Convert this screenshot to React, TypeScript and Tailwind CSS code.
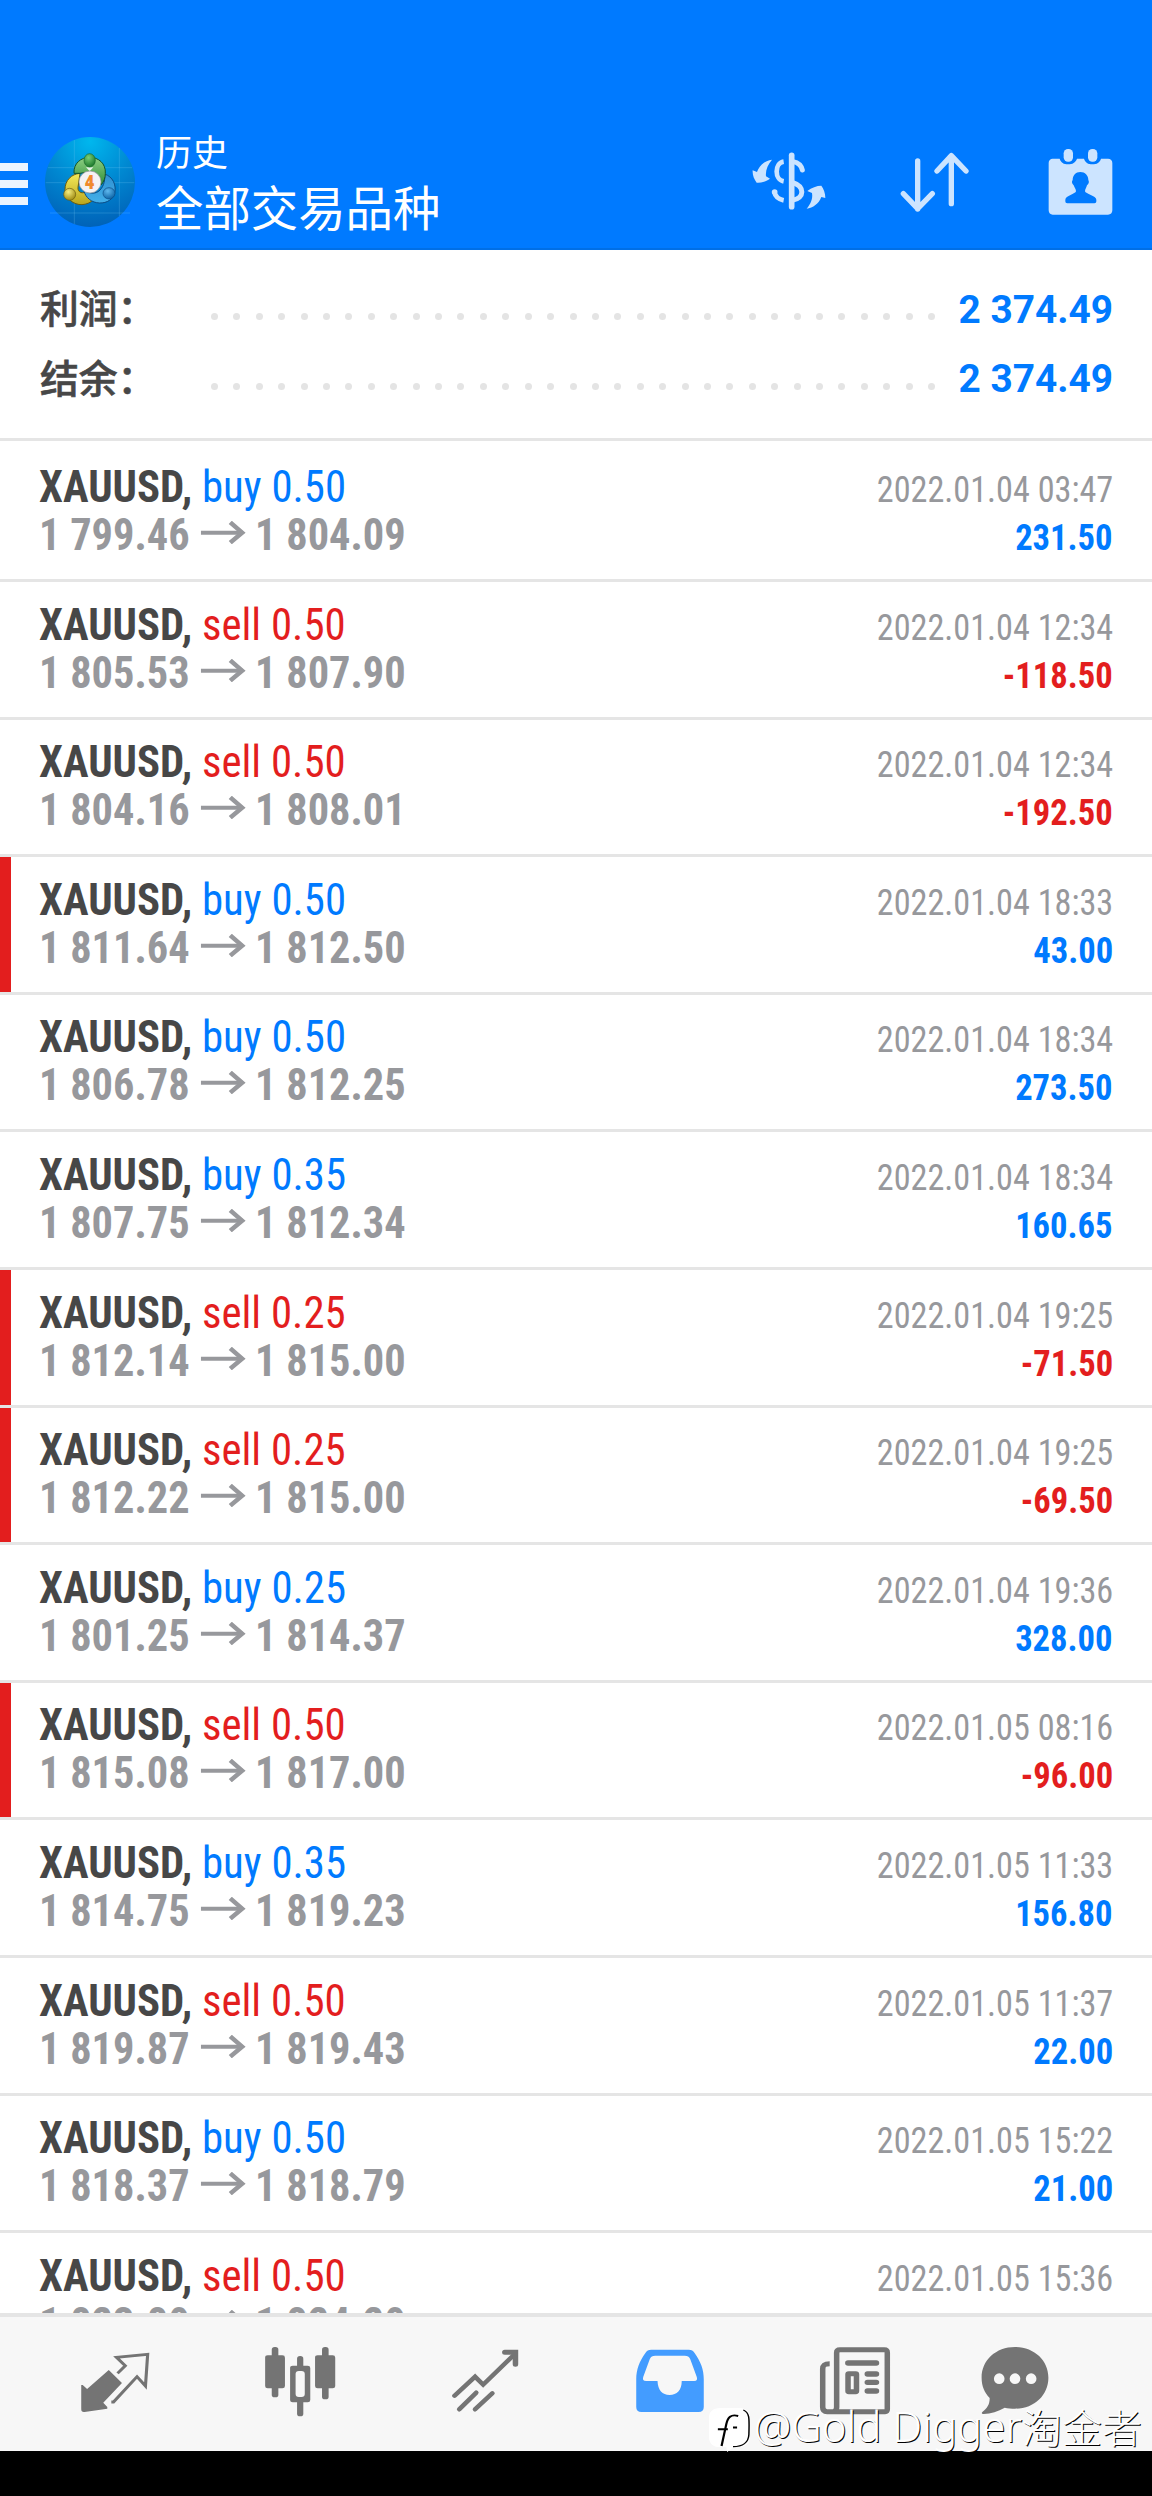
type Deal = {
    side: 'buy' | 'sell';
    lots: string;
    open: string;
    close: string;
    time: string;
    profit: string;
    marked?: boolean;
};

const deals: Deal[] = [
    { side: 'buy', lots: '0.50', open: '1 799.46', close: '1 804.09', time: '2022.01.04 03:47', profit: '231.50' },
    { side: 'sell', lots: '0.50', open: '1 805.53', close: '1 807.90', time: '2022.01.04 12:34', profit: '-118.50' },
    { side: 'sell', lots: '0.50', open: '1 804.16', close: '1 808.01', time: '2022.01.04 12:34', profit: '-192.50' },
    { side: 'buy', lots: '0.50', open: '1 811.64', close: '1 812.50', time: '2022.01.04 18:33', profit: '43.00', marked: true },
    { side: 'buy', lots: '0.50', open: '1 806.78', close: '1 812.25', time: '2022.01.04 18:34', profit: '273.50' },
    { side: 'buy', lots: '0.35', open: '1 807.75', close: '1 812.34', time: '2022.01.04 18:34', profit: '160.65' },
    { side: 'sell', lots: '0.25', open: '1 812.14', close: '1 815.00', time: '2022.01.04 19:25', profit: '-71.50', marked: true },
    { side: 'sell', lots: '0.25', open: '1 812.22', close: '1 815.00', time: '2022.01.04 19:25', profit: '-69.50', marked: true },
    { side: 'buy', lots: '0.25', open: '1 801.25', close: '1 814.37', time: '2022.01.04 19:36', profit: '328.00' },
    { side: 'sell', lots: '0.50', open: '1 815.08', close: '1 817.00', time: '2022.01.05 08:16', profit: '-96.00', marked: true },
    { side: 'buy', lots: '0.35', open: '1 814.75', close: '1 819.23', time: '2022.01.05 11:33', profit: '156.80' },
    { side: 'sell', lots: '0.50', open: '1 819.87', close: '1 819.43', time: '2022.01.05 11:37', profit: '22.00' },
    { side: 'buy', lots: '0.50', open: '1 818.37', close: '1 818.79', time: '2022.01.05 15:22', profit: '21.00' },
    { side: 'sell', lots: '0.50', open: '1 823.80', close: '1 824.20', time: '2022.01.05 15:36', profit: '-10.00' },
];

const totals = [
    { label: '利润：', value: '2 374.49' },
    { label: '结余：', value: '2 374.49' },
];

function AppLogo() {
    return (
        <svg className="w-[90px] h-[90px] shrink-0" viewBox="135 53 270 270">
            <defs>
                <radialGradient id="sky" cx="0.5" cy="0.05" r="0.95">
                    <stop offset="0" stopColor="#00b7ee" />
                    <stop offset="0.5" stopColor="#0089d2" />
                    <stop offset="1" stopColor="#0062b8" />
                </radialGradient>
                <linearGradient id="green" x1="0" y1="0" x2="0" y2="1">
                    <stop offset="0" stopColor="#8fd083" />
                    <stop offset="1" stopColor="#2f8f3a" />
                </linearGradient>
                <linearGradient id="yellow" x1="0" y1="0" x2="0" y2="1">
                    <stop offset="0" stopColor="#f4ea5a" />
                    <stop offset="1" stopColor="#b9a51c" />
                </linearGradient>
                <linearGradient id="blue" x1="0" y1="0" x2="0" y2="1">
                    <stop offset="0" stopColor="#2f8fd0" />
                    <stop offset="1" stopColor="#43b0ea" />
                </linearGradient>
                <radialGradient id="greenHead" cx="0.4" cy="0.3" r="0.7">
                    <stop offset="0" stopColor="#7ccf78" />
                    <stop offset="1" stopColor="#1c7a2c" />
                </radialGradient>
                <radialGradient id="yellowHead" cx="0.4" cy="0.3" r="0.7">
                    <stop offset="0" stopColor="#f6ee80" />
                    <stop offset="1" stopColor="#a08c14" />
                </radialGradient>
                <radialGradient id="blueHead" cx="0.4" cy="0.3" r="0.7">
                    <stop offset="0" stopColor="#5fb8ee" />
                    <stop offset="1" stopColor="#0f66a8" />
                </radialGradient>
            </defs>
            <circle cx="270" cy="188" r="135" fill="url(#sky)" />
            <path d="M223 62V314M358 86V290M144 145H396M137 190H403M150 281H390" stroke="#7fd0f5" strokeOpacity="0.35" strokeWidth="2" />
            <path d="M240 162C214 164 195 184 195 210C195 238 222 257 246 256C260 255 272 250 282 240L262 214C250 226 232 220 234 204Z" fill="url(#yellow)" stroke="#6b5c10" strokeWidth="3" />
            <path d="M314 164C338 172 350 196 344 222C336 246 312 254 290 250C268 246 252 228 250 206C262 222 280 226 296 216C308 206 316 190 314 164Z" fill="url(#blue)" stroke="#0c4c86" strokeWidth="3" />
            <path d="M222 162C220 132 243 114 269 114S318 132 316 162C316 176 312 186 304 196L286 160H252L240 162Z" fill="url(#green)" stroke="#14532a" strokeWidth="3" />
            <path d="M258 144H280L269 156Z" fill="#e8f4ea" />
            <ellipse cx="269" cy="123" rx="17" ry="20" fill="url(#greenHead)" stroke="#1a6a2c" strokeWidth="2" />
            <ellipse cx="209" cy="225" rx="18" ry="18" fill="url(#yellowHead)" stroke="#6b5c10" strokeWidth="2" />
            <ellipse cx="327" cy="222" rx="18" ry="17" fill="url(#blueHead)" stroke="#0c4c86" strokeWidth="2" />
            <circle cx="270" cy="188" r="33" fill="#f4f2f4" stroke="#8c8f94" strokeWidth="2" />
            <text x="269" y="208" textAnchor="middle" fontFamily="Open Sans, sans-serif" fontWeight="800" fontSize="56" fill="#f08a2c">4</text>
        </svg>
    );
}

function CurrencyIcon() {
    return (
        <svg className="w-[76px] h-[68px]" viewBox="90 85 228 204" fill="none" stroke="#cce4ff">
            <path d="M212 107V261" strokeWidth="17" strokeLinecap="round" />
            <path d="M188 126C160 130 160 180 188 185" strokeWidth="14" />
            <path d="M159 215C162 229 172 239 188 242" strokeWidth="14" strokeLinecap="butt" />
            <circle cx="161" cy="217" r="8.5" fill="#cce4ff" stroke="none" />
            <path d="M216 126C232 129 241 137 244 151" strokeWidth="15" strokeLinecap="round" />
            <path d="M214 188C252 200 252 236 214 242" strokeWidth="15" />
            <path d="M153 120C134 122 115 136 108 157L95 152C94 166 99 178 107 189C121 190 134 186 147 177L135 170C133 152 140 135 153 120Z" fill="#cce4ff" stroke="none" />
            <path d="M257 267C276 264 293 253 301 232L313 235C313 221 308 207 301 198C287 198 272 204 259 214L273 220C276 238 269 253 257 267Z" fill="#cce4ff" stroke="none" />
        </svg>
    );
}

function SortIcon() {
    return (
        <svg className="w-[71px] h-[68px]" viewBox="534 85 213 204" fill="none" stroke="#cce4ff" strokeWidth="16" strokeLinecap="round" strokeLinejoin="round">
            <path d="M590 124V268M547 222L590 267L634 222" />
            <path d="M691 252V108M648 154L691 108L735 154" />
        </svg>
    );
}

function CalendarIcon() {
    return (
        <svg className="w-[65px] h-[68px]" viewBox="980 85 195 204" fill="#cce4ff">
            <path d="M994 117H1015C1019 129 1027 134 1040 134C1054 134 1062 129 1067 117H1088C1092 129 1100 134 1113 134C1127 134 1135 129 1139 117H1160C1168 117 1173 122 1173 130V272C1173 280 1168 285 1160 285H994C987 285 982 280 982 272V130C982 122 987 117 994 117Z" />
            <rect x="1027" y="88" width="28" height="38" rx="13" />
            <rect x="1100" y="88" width="28" height="38" rx="13" />
            <path d="M1077 157C1063 157 1054 167 1054 181C1050 185 1052 193 1057 197C1060 205 1064 209 1064 215C1063 223 1032 228 1032 240V245C1032 249 1034 251 1038 251H1119C1123 251 1125 249 1125 245V240C1125 228 1092 223 1091 215C1091 209 1095 205 1097 197C1103 193 1104 185 1101 181C1101 167 1091 157 1077 157Z" fill="#007aff" />
        </svg>
    );
}

function PriceArrow() {
    return (
        <svg className="w-[47px] h-[23px] ml-[12px] mr-[9px] mb-[6px] inline-block align-baseline" viewBox="0 0 129 69" preserveAspectRatio="none" fill="none" stroke="#97989c">
            <path d="M0 35H120" strokeWidth="12" />
            <path d="M84 4L118 35L84 65" strokeWidth="13" />
        </svg>
    );
}

function QuotesIcon() {
    return (
        <svg className="w-20 h-20" viewBox="203 315 218 240" preserveAspectRatio="none" fill="#747474">
            <path d="M295 390L331 429L280 488L291 501V506L229 516C223 517 220 514 220 508V435H224L236 447Z" />
            <path d="M319 400L340 377L316 352L401 343L395 438L372 410L308 486H302" fill="none" stroke="#747474" strokeWidth="8.5" />
        </svg>
    );
}

function ChartIcon() {
    return (
        <svg className="w-20 h-20" viewBox="705 315 218 240" preserveAspectRatio="none" fill="#747474">
            <rect x="737" y="321" width="18" height="151" rx="8" />
            <rect x="719" y="346" width="54" height="99" rx="7" />
            <rect x="874" y="321" width="18" height="157" rx="8" />
            <rect x="855" y="346" width="55" height="99" rx="7" />
            <rect x="806" y="348" width="17" height="181" rx="8" />
            <rect x="787" y="377" width="55" height="110" rx="7" />
            <rect x="802" y="393" width="25" height="78" rx="9" fill="#f7f7f7" />
        </svg>
    );
}

function TradeIcon() {
    return (
        <svg className="w-20 h-20" viewBox="1208 315 218 240" preserveAspectRatio="none" fill="none" stroke="#747474" strokeWidth="13" strokeLinecap="round">
            <path d="M1234 467L1290 410L1312 434L1399 341" />
            <path d="M1371 337H1400V373" strokeWidth="15" />
            <path d="M1247 508L1293 458M1290 508L1337 460" />
        </svg>
    );
}

function HistoryIcon() {
    return (
        <svg className="w-20 h-20" viewBox="145 315 218 240" preserveAspectRatio="none">
            <path d="M203 329H305C313 329 317 332 321 339C338 366 346 388 346 418V501C346 511 341 516 332 516H176C167 516 162 511 162 501V418C162 388 171 364 187 339C191 332 195 329 203 329Z" fill="#439cff" />
            <path d="M214 347H294C302 347 306 350 309 357L327 411C329 419 327 423 320 423H286C286 450 273 465 253 465S221 450 220 423H189C181 423 179 419 181 411L199 357C202 350 206 347 214 347Z" fill="#f7f7f7" />
        </svg>
    );
}

function NewsIcon() {
    return (
        <svg className="w-20 h-20" viewBox="649 315 218 240" preserveAspectRatio="none" fill="none" stroke="#747474" strokeWidth="15">
            <path d="M689 371C676 371 670 375 670 387V502C670 511 674 515 682 515H840C844 515 846 512 846 507V338C846 331 843 329 838 329H717C711 329 708 332 708 338V502C708 511 704 515 698 515" />
            <path d="M739 369H816" strokeWidth="16" strokeLinecap="round" />
            <path d="M792 402H816M792 427H816M792 453H816" strokeWidth="16" strokeLinecap="round" />
            <rect x="739" y="401" width="23" height="54" rx="2" />
        </svg>
    );
}

function MessagesIcon() {
    return (
        <svg className="w-20 h-20" viewBox="1082 315 218 240" preserveAspectRatio="none" fill="#747474">
            <path d="M1191 321C1243 321 1282 361 1282 413C1282 466 1243 506 1191 506C1181 506 1171 505 1163 503C1145 514 1125 522 1106 522C1101 522 1099 519 1102 516C1116 504 1122 493 1122 474C1108 458 1100 438 1100 413C1100 361 1139 321 1191 321Z" />
            <g fill="#f7f7f7">
                <ellipse cx="1148" cy="416" rx="14.5" ry="16" />
                <ellipse cx="1191" cy="416" rx="14.5" ry="16" />
                <ellipse cx="1235" cy="416" rx="14.5" ry="16" />
            </g>
        </svg>
    );
}

function DealRow({ deal }: { deal: Deal }) {
    const sideColor = deal.side === 'buy' ? 'text-[#007aff]' : 'text-[#e31e1e]';
    const profitColor = deal.profit.startsWith('-') ? 'text-[#e31e1e]' : 'text-[#007aff]';

    return (
        <div className="flex h-[137.6px] shrink-0 border-b-[3px] border-[#e5e5e5]">
            <div className={deal.marked ? 'w-[11px] bg-[#e31e1e]' : 'w-[11px]'} />
            <div className="flex-1 pt-[18.6px] pl-[28px] pr-[39px] text-[44.8px] leading-[48px]">
                <div className="flex justify-between items-baseline h-[48px]">
                    <div className={`origin-left scale-x-[0.955] ${sideColor}`}>
                        <span className="font-bold text-[#474747]">XAUUSD,</span> {deal.side} {deal.lots}
                    </div>
                    <div className="origin-right scale-x-[0.945] text-[36.2px] leading-none text-[#97989c]">{deal.time}</div>
                </div>
                <div className="flex justify-between items-baseline h-[48px] font-bold">
                    <div className="origin-left scale-x-[0.963] text-[44px] text-[#97989c]">
                        {deal.open}
                        <PriceArrow />
                        {deal.close}
                    </div>
                    <div className={`origin-right scale-x-[0.95] text-[36.4px] leading-none ${profitColor}`}>{deal.profit}</div>
                </div>
            </div>
        </div>
    );
}

export default function App() {
    return (
        <div className="relative flex flex-col w-[1152px] h-[2496px] overflow-hidden bg-white font-['Roboto_Condensed','Roboto','Noto_Sans_CJK_SC',sans-serif] font-stretch-condensed">
            <header className="flex h-[250px] shrink-0 items-center bg-[#007aff] pt-[116px] pr-[39px] border-b-2 border-[#006fe6]">
                <div className="flex flex-col gap-[9px] w-[28px] mr-[17px] mt-[4px]">
                    <div className="h-2 bg-[#ebf4ff]" />
                    <div className="h-2 bg-[#ebf4ff]" />
                    <div className="h-2 bg-[#ebf4ff]" />
                </div>
                <AppLogo />
                <div className="ml-[21px] -mt-[3px] text-white font-['Noto_Sans_CJK_SC',sans-serif]">
                    <div className="text-[36px] leading-[50px]">历史</div>
                    <div className="text-[47.4px] leading-[62px]">全部交易品种</div>
                </div>
                <div className="ml-auto flex items-center">
                    <CurrencyIcon />
                    <div className="ml-[72px] mr-[78px]">
                        <SortIcon />
                    </div>
                    <CalendarIcon />
                </div>
            </header>

            <section className="flex flex-col h-[191px] shrink-0 pt-[24px] pl-[40px] pr-[39px] border-b-[3px] border-[#e5e5e5]">
                {totals.map((total) => (
                    <div key={total.label} className="flex items-center h-[69.6px]">
                        <div className="w-[171px] pb-[5px] text-[38.8px] font-medium text-[#474747] [-webkit-text-stroke:0.6px_#474747] font-['Noto_Sans_CJK_SC',sans-serif]">{total.label}</div>
                        <div className="flex w-[724px] justify-between mt-[16px]">
                            {Array.from({ length: 33 }, (_, i) => (
                                <span key={i} className="size-[7px] rounded-full bg-[#e4e4e4]" />
                            ))}
                        </div>
                        <div className="ml-auto pt-[2px] text-[38.8px] font-bold text-[#007aff] font-['Roboto',sans-serif] font-stretch-normal">{total.value}</div>
                    </div>
                ))}
            </section>

            <main className="flex flex-col flex-1 min-h-0 overflow-hidden pt-[3.4px]">
                {deals.map((deal, idx) => (
                    <DealRow key={idx} deal={deal} />
                ))}
            </main>

            <nav className="flex h-[138px] shrink-0 items-start bg-[#f7f7f7] border-t-4 border-[#e5e5e5] pt-[28px] pl-[22px]">
                <div className="flex w-[185px] justify-center"><QuotesIcon /></div>
                <div className="flex w-[185px] justify-center"><ChartIcon /></div>
                <div className="flex w-[185px] justify-center"><TradeIcon /></div>
                <div className="flex w-[185px] justify-center"><HistoryIcon /></div>
                <div className="flex w-[185px] justify-center"><NewsIcon /></div>
                <div className="flex w-[136px] justify-center"><MessagesIcon /></div>
            </nav>
            <div className="h-[45px] shrink-0 bg-black" />

            {/* Watermark */}
            <div className="absolute right-[10px] bottom-[44px] flex items-center text-white whitespace-nowrap [text-shadow:1px_1px_0_#000]">
                <svg className="w-[41px] h-[44px] mt-[8px] mr-[4px]" viewBox="365 512 111 133" preserveAspectRatio="none">
                    <path d="M394 512H448C466 512 476 524 476 540V600C476 618 466 630 446 630H432L414 645L412 630H394C376 630 365 618 365 600V540C365 524 376 512 394 512Z" fill="#fff" />
                    <path d="M444 536C424 530 416 540 412 560L399 627M389 576H416M430 571H441" fill="none" stroke="#000" strokeWidth="6" />
                    <path d="M458 518C476 526 474 546 473 592C472 616 456 629 430 629" fill="none" stroke="#000" strokeWidth="4" />
                </svg>
                <span className="text-[42px] leading-[50px] font-light font-['Noto_Sans',sans-serif] font-stretch-normal">@Gold Digger</span>
                <span className="text-[40px] leading-[50px] font-light font-['Noto_Sans_CJK_SC',sans-serif]">淘金者</span>
            </div>
        </div>
    );
}
